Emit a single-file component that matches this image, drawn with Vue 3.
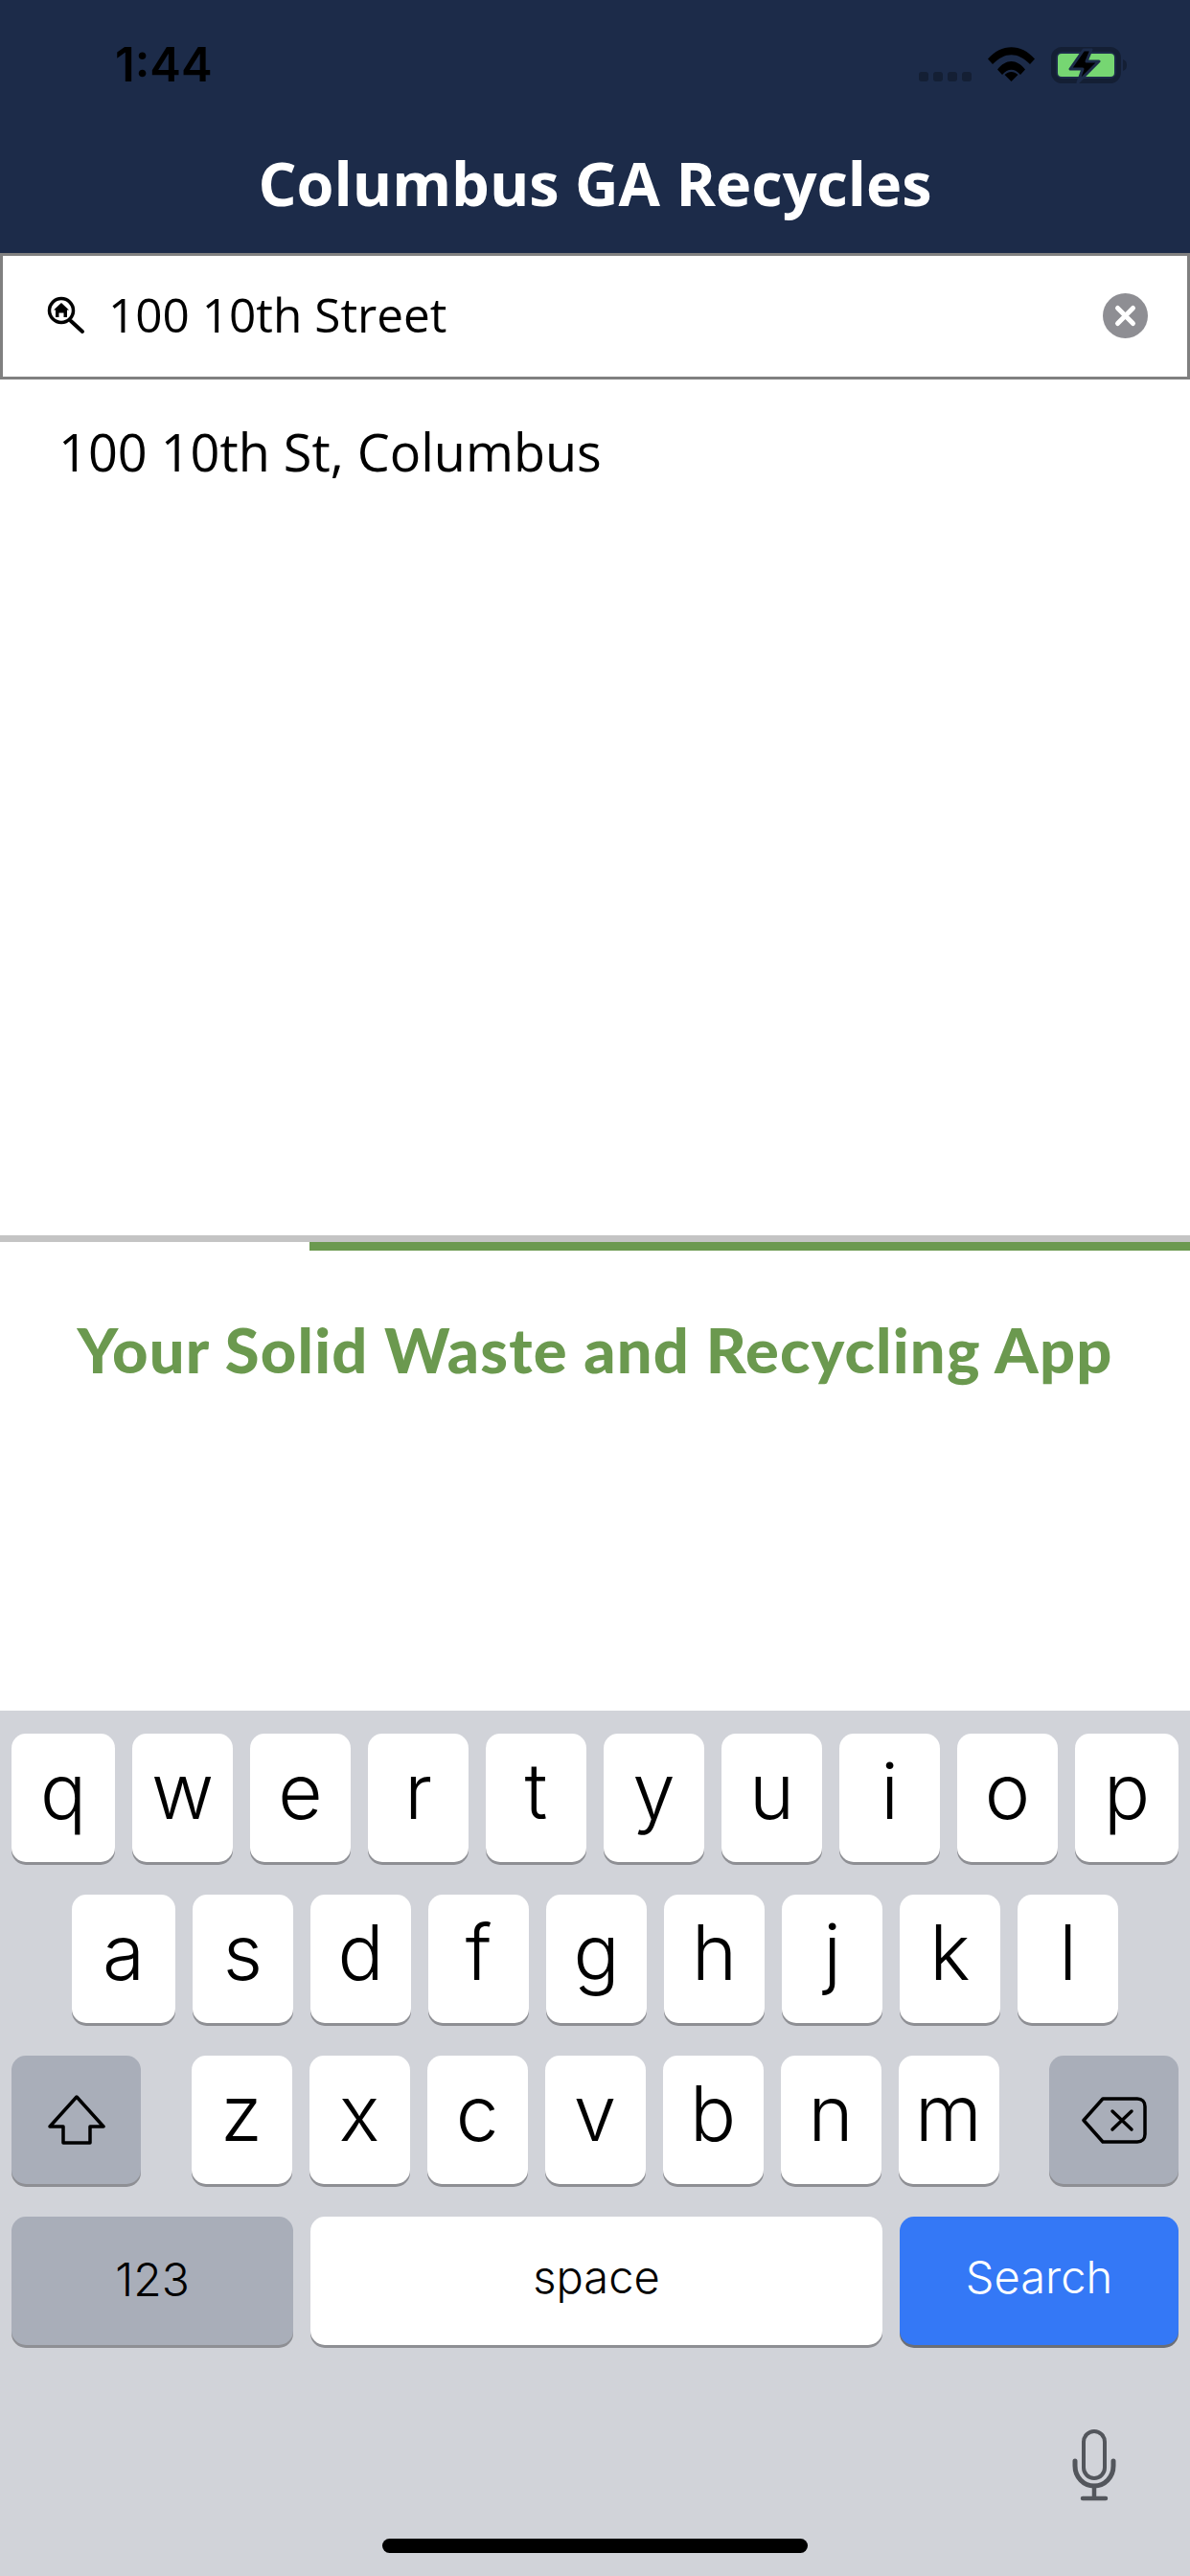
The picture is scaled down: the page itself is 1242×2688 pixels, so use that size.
<script setup>
const rows = [
  { cls: 'row-top', keys: ['q', 'w', 'e', 'r', 't', 'y', 'u', 'i', 'o', 'p'] },
  { cls: 'row-mid', keys: ['a', 's', 'd', 'f', 'g', 'h', 'j', 'k', 'l'] }
]
const lowerKeys = ['z', 'x', 'c', 'v', 'b', 'n', 'm']
</script>

<template>
  <div class="screen">
    <header class="top">
      <div class="status">
        <span class="time">1:44</span>
        <div class="status-icons">
          <div class="signal"><i></i><i></i><i></i><i></i></div>
          <svg class="wifi" width="49" height="36" viewBox="0 0 49 36">
            <path d="M0 12.5C14-4 35-4 49 12.5L44 18C31 5 18 5 5 18Z" />
            <path d="M10 23.500C19 12 30 12 39 23.500L34 29C28 22 21 22 15 29Z" />
            <path d="M17.500 29L24.500 36L31.500 29C27 25 22 25 17.500 29Z" />
          </svg>
          <svg class="battery" width="80" height="38" viewBox="0 0 80 38">
            <rect x="2.500" y="2.500" width="68" height="33" rx="9" fill="none" stroke="#141f34" stroke-width="5" />
            <rect x="7" y="7" width="59" height="24" rx="4" fill="#76d672" />
            <path d="M75 13C78 14 79 16 79 19C79 22 78 24 75 25Z" fill="#141f34" />
            <path d="M34 3L20 23H33L28 37L50 15H37L42 3Z" fill="#000" stroke="#1c2b49" stroke-width="3" stroke-linejoin="round" />
          </svg>
        </div>
      </div>
      <h1 class="title">Columbus GA Recycles</h1>
    </header>

    <div class="search">
      <svg class="home-search" width="42" height="42" viewBox="0 0 42 42">
        <circle cx="17" cy="16" r="12.500" fill="none" stroke="#000" stroke-width="3.500" />
        <path d="M27 27L39 38" stroke="#000" stroke-width="4" stroke-linecap="round" />
        <path d="M17 8L25 15.500H23V23H19.500V18.500H14.500V23H11V15.500H9Z" fill="#000" />
      </svg>
      <span class="search-text">100 10th Street</span>
      <span class="clear">
        <svg width="47" height="47" viewBox="0 0 47 47">
          <circle cx="23.500" cy="23.500" r="23.500" fill="#8e8e93" />
          <path d="M15.500 15.500L31.500 31.500M31.500 15.500L15.500 31.500" stroke="#fff" stroke-width="5" stroke-linecap="round" />
        </svg>
      </span>
    </div>

    <div class="results">
      <div class="result">100 10th St, Columbus</div>
    </div>

    <div class="banner">
      <div class="banner-rule"><div class="banner-green"></div></div>
      <div class="slogan">Your Solid Waste and Recycling App</div>
    </div>

    <div class="keyboard">
      <div v-for="row in rows" :key="row.cls" class="kb-row" :class="row.cls">
        <div v-for="k in row.keys" :key="k" class="key letter">{{ k }}</div>
      </div>

      <div class="kb-row row-low">
        <div class="key dark shift">
          <svg width="60" height="52" viewBox="0 0 60 52">
            <path d="M30 2L58 33H44V50H16V33H2Z" fill="none" stroke="#000" stroke-width="3.500" stroke-linejoin="round" />
          </svg>
        </div>
        <div class="low-letters">
          <div v-for="k in lowerKeys" :key="k" class="key letter">{{ k }}</div>
        </div>
        <div class="key dark back">
          <svg width="68" height="49" viewBox="0 0 68 49">
            <path d="M22 2H58C63 2 66 5 66 10V39C66 44 63 47 58 47H22L2 24.500Z" fill="none" stroke="#000" stroke-width="3.500" stroke-linejoin="round" />
            <path d="M32 15L52 34M52 15L32 34" stroke="#000" stroke-width="3.500" stroke-linecap="round" />
          </svg>
        </div>
      </div>

      <div class="kb-row row-bottom">
        <div class="key dark num">123</div>
        <div class="key space">space</div>
        <div class="key go">Search</div>
      </div>

      <div class="kb-foot">
        <svg class="mic" width="46" height="75" viewBox="0 0 46 75">
          <rect x="12" y="2" width="22" height="49" rx="11" fill="none" stroke="#53565c" stroke-width="4" />
          <path d="M3 33V38C3 50 12 59 23 59C34 59 43 50 43 38V33" fill="none" stroke="#53565c" stroke-width="5" stroke-linecap="round" />
          <path d="M23 59V72M11 72H35" fill="none" stroke="#53565c" stroke-width="4.500" stroke-linecap="round" />
        </svg>
      </div>
      <div class="home-bar"></div>
    </div>
  </div>
</template>

<style>
html, body {
  margin: 0;
  background: #fff;
}
</style>

<style scoped>
.screen {
  width: 1242px;
  height: 2688px;
  display: flex;
  flex-direction: column;
  overflow: hidden;
  background: #fff;
  font-family: "Open Sans", sans-serif;
}

.top {
  height: 264px;
  background: #1c2b49;
  display: flex;
  flex-direction: column;
}
.status {
  height: 151px;
  padding: 0 65px 0 120px;
  display: flex;
  justify-content: space-between;
  align-items: flex-start;
}
.time {
  margin-top: 40px;
  font-family: Inter, sans-serif;
  font-weight: 600;
  font-size: 49px;
  line-height: 56px;
  color: #000;
}
.status-icons {
  margin-top: 49px;
  display: flex;
  align-items: flex-start;
}
.signal {
  display: flex;
  gap: 5px;
  margin: 26px 17px 0 0;
}
.signal i {
  width: 10px;
  height: 10px;
  border-radius: 3px;
  background: #141f34;
}
.battery {
  margin-left: 17px;
}
.title {
  margin: 0;
  font-size: 63px;
  line-height: 80px;
  font-weight: 700;
  color: #fff;
  text-align: center;
}

.search {
  height: 132px;
  box-sizing: border-box;
  border: 3px solid #808080;
  display: flex;
  align-items: center;
  padding: 0 41px 0 44px;
}
.home-search {
  margin-right: 24px;
  margin-top: -2px;
}
.search-text {
  flex: 1;
  font-size: 49.500px;
  line-height: 60px;
  color: #000;
  margin-top: -4px;
}
.clear {
  display: flex;
  margin-top: -2px;
}

.results {
  flex: 1;
}
.result {
  padding: 0 61px;
  margin-top: 39px;
  font-size: 54px;
  line-height: 72px;
  color: #000;
}

.banner {
  height: 496px;
}
.banner-rule {
  height: 7px;
  background: #c4c4c4;
}
.banner-green {
  margin-left: 323px;
  position: relative;
  top: 7px;
  height: 9px;
  background: #6b994f;
}
.slogan {
  margin-top: 72px;
  font-family: Lato, sans-serif;
  font-weight: 900;
  font-size: 65px;
  line-height: 80px;
  letter-spacing: 1.2px;
  color: #6b994f;
  text-align: center;
}

.keyboard {
  position: relative;
  flex: 0 0 903px;
  box-sizing: border-box;
  padding-top: 24px;
  background: #d1d3d9;
  display: flex;
  flex-direction: column;
  gap: 34px;
  font-family: Inter, sans-serif;
}
.kb-row {
  display: flex;
  gap: 18px;
}
.row-top {
  padding: 0 12px;
}
.row-mid {
  padding: 0 75px;
}
.row-low {
  padding: 0 12px;
  justify-content: space-between;
}
.row-bottom {
  padding: 0 12px;
}
.low-letters {
  display: flex;
  gap: 18px;
}

.key {
  height: 134px;
  border-radius: 15px;
  box-shadow: 0 3px 0 #8e8f94;
  background: #fff;
  color: #000;
  display: flex;
  align-items: center;
  justify-content: center;
  box-sizing: border-box;
}
.letter {
  width: 105px;
  font-size: 80px;
  font-weight: 300;
  padding-bottom: 15px;
}
.row-top .letter:first-child,
.row-top .letter:last-child,
.row-mid .letter:first-child {
  width: 108px;
}
.dark {
  background: #a9aeb9;
}
.shift,
.back {
  width: 135px;
}
.num {
  width: 294px;
  font-size: 48px;
  font-weight: 300;
  padding-bottom: 3px;
}
.space {
  flex: 1;
  font-size: 47px;
  font-weight: 300;
  padding-bottom: 10px;
}
.go {
  width: 291px;
  background: #3478f6;
  color: #fff;
  font-size: 47px;
  font-weight: 300;
  padding-bottom: 10px;
  box-shadow: 0 3px 0 #6b6e75;
}

.kb-foot {
  display: flex;
  justify-content: flex-end;
  padding: 0 77px 0 0;
  margin-top: 54px;
}
.home-bar {
  position: absolute;
  left: 399px;
  bottom: 24px;
  width: 444px;
  height: 15px;
  border-radius: 8px;
  background: #000;
}
</style>
